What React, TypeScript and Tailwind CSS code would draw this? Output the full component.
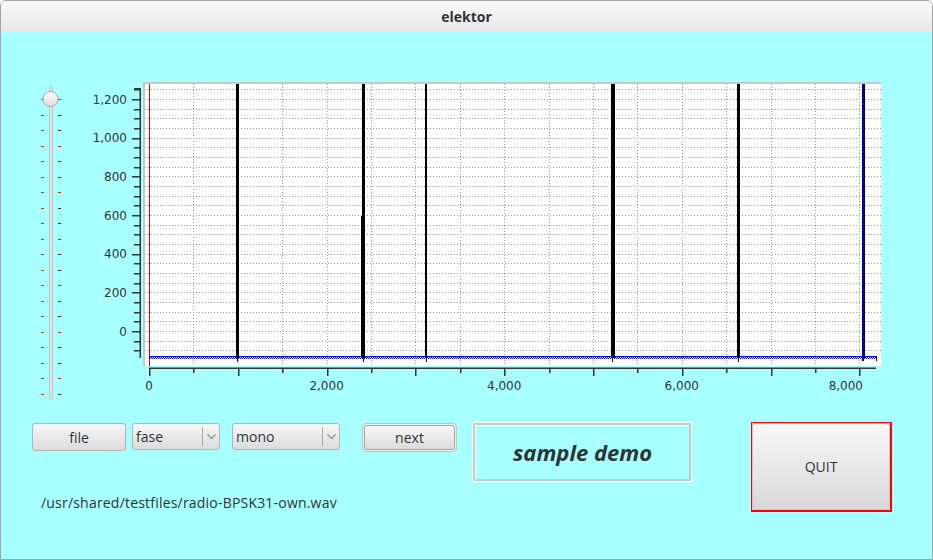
import React from 'react';

const yOf = (v: number) => 331 - v * 0.19333;
const xOf = (v: number) => 149 + v * 0.0888;

const yGrid = Array.from({ length: 28 }, (_, i) => -100 + i * 50);
const xGrid = Array.from({ length: 16 }, (_, i) => (i + 1) * 500);
const yLabels = [0, 200, 400, 600, 800, 1000, 1200];
const xLabels = [0, 2000, 4000, 6000];

// spikes: left x, width
const spikes = [
    { x: 236, w: 3 },
    { x: 362, w: 3 },
    { x: 425, w: 2 },
    { x: 611, w: 4 },
    { x: 737, w: 3 },
];

function Slider() {
    const ticks = Array.from({ length: 20 }, (_, i) => 99 + i * 15.5);
    return (
        <svg width={40} height={320} className="shrink-0">
            <defs>
                <linearGradient id="knob" x1="0" y1="0" x2="0" y2="1">
                    <stop offset="0" stopColor="#ffffff" />
                    <stop offset="1" stopColor="#dedede" />
                </linearGradient>
            </defs>
            <g transform="translate(-30,-80)">
                {ticks.map((y, i) => (
                    <g key={i}>
                        <rect x={41} y={Math.round(y)} width={3} height={1} fill={i % 4 === 2 ? '#555' : '#c0400a'} />
                        <rect x={58} y={Math.round(y)} width={3} height={1} fill={i % 3 === 0 ? '#d02000' : '#4a2a20'} />
                    </g>
                ))}
                <rect x={49} y={86} width={4} height={313} rx={2} fill="#c4c4c4" />
                <rect x={50} y={87} width={2} height={311} fill="#e2e2e2" />
                <circle cx={50.5} cy={99} r={7.5} fill="url(#knob)" stroke="#a6a6a6" />
            </g>
        </svg>
    );
}

function Chart() {
    return (
        <svg width={830} height={320} className="shrink-0" style={{ fontFamily: '"DejaVu Sans", sans-serif' }}>
            <defs>
                <pattern id="chk" width="2" height="2" patternUnits="userSpaceOnUse">
                    <rect x="0" y="0" width="1" height="1" fill="#0000ff" />
                    <rect x="1" y="1" width="1" height="1" fill="#0000ff" />
                </pattern>
                <pattern id="dots" width="2" height="2" patternUnits="userSpaceOnUse">
                    <rect x="0" y="0" width="2" height="2" fill="#000060" />
                    <rect x="1" y="0" width="1" height="1" fill="#0000ff" />
                </pattern>
            </defs>
            <g transform="translate(-70,-80)">
                {/* plot frame */}
                <rect x={143} y={82} width={738} height={284} fill="#c8c8c8" />
                <rect x={145} y={84} width={736} height={282} fill="#ffffff" />

                {/* grid */}
                {yGrid.map((v) => (
                    <line key={v} x1={145} x2={881} y1={Math.round(yOf(v)) + 0.5} y2={Math.round(yOf(v)) + 0.5} stroke="#9a9a9a" strokeDasharray="1 2" />
                ))}
                {xGrid.map((v) => (
                    <line key={v} x1={Math.round(xOf(v)) + 0.5} x2={Math.round(xOf(v)) + 0.5} y1={84} y2={366} stroke="#9a9a9a" strokeDasharray="1 2" />
                ))}

                {/* red marker */}
                <rect x={149} y={84} width={1} height={282} fill="#e00000" />

                {/* baseline */}
                <rect x={149} y={356} width={728} height={1} fill="#0000ff" />
                <rect x={149} y={357} width={728} height={2} fill="url(#chk)" />
                <rect x={876} y={356} width={1} height={5} fill="#000" />

                {/* spikes */}
                {spikes.map((s) => (
                    <g key={s.x}>
                        <rect x={s.x} y={84} width={s.w} height={274} fill="#000" />
                        <rect x={s.x + 1} y={358} width={1} height={4} fill="#000" />
                    </g>
                ))}
                <rect x={361} y={216} width={1} height={142} fill="#000" />
                <rect x={862} y={84} width={3} height={274} fill="url(#dots)" />
                <rect x={862} y={358} width={2} height={3} fill="#000" />

                {/* y axis */}
                <rect x={139.5} y={88} width={1.5} height={270} fill="#333" />
                {yGrid.map((v) => {
                    const major = v % 200 === 0 && v >= 0;
                    return (
                        <rect key={v} x={major ? 132 : 134} y={Math.round(yOf(v))} width={major ? 8 : 6} height={1.5} fill="#333" />
                    );
                })}
                <rect x={134} y={88} width={6} height={1.5} fill="#333" />
                {yLabels.map((v) => (
                    <text key={v} x={127} y={yOf(v) + 4.5} textAnchor="end" fontSize={12} fill="#333">
                        {v.toLocaleString('en-US')}
                    </text>
                ))}

                {/* x axis */}
                <rect x={149} y={367.5} width={727} height={1.5} fill="#333" />
                {Array.from({ length: 17 }, (_, i) => i * 500).map((v) => {
                    const major = v % 1000 === 0;
                    return (
                        <rect key={v} x={Math.round(xOf(v))} y={368} width={1.5} height={major ? 8 : 5} fill="#333" />
                    );
                })}
                {xLabels.map((v) => (
                    <text key={v} x={xOf(v)} y={390} textAnchor="middle" fontSize={12} fill="#333">
                        {v.toLocaleString('en-US')}
                    </text>
                ))}
                <text x={863} y={390} textAnchor="end" fontSize={12} fill="#333">
                    8,000
                </text>
            </g>
        </svg>
    );
}

function Button({ label, className }: { label: string; className: string }) {
    return (
        <div className={`flex items-center justify-center rounded-[3px] border border-[#b4b4b4] bg-linear-to-b from-[#f7f7f7] to-[#dcdcdc] text-[14px] text-[#2e3436] ${className}`}>
            {label}
        </div>
    );
}

function Combo({ label, className }: { label: string; className: string }) {
    return (
        <div className={`flex items-center rounded-[3px] border border-[#b4b4b4] bg-linear-to-b from-[#f7f7f7] to-[#dcdcdc] text-[14px] text-[#2e3436] ${className}`}>
            <span className="flex-1 pl-[3px]">{label}</span>
            <span className="h-[19px] w-px bg-[#a9a9a9]" />
            <span className="flex w-[16px] justify-center">
                <svg width={9} height={6}>
                    <polyline points="0.5,0.5 4.5,4.5 8.5,0.5" fill="none" stroke="#8a8a8a" strokeWidth={1.2} />
                </svg>
            </span>
        </div>
    );
}

export default function App() {
    return (
        <div className="flex h-[560px] w-[933px] flex-col overflow-hidden rounded-t-[6px] border border-[#a3a3a3] font-['Open_Sans',sans-serif]">
            <div className="flex h-[31px] shrink-0 items-center justify-center bg-linear-to-b from-[#f8f8f8] to-[#e8e8e8]">
                <span className="text-[14px] font-bold text-[#2e3436]">elektor</span>
            </div>

            <div className="flex-1 bg-[#a8ffff]">
                <div className="flex pl-[29px] pt-[48px]">
                    <Slider />
                    <Chart />
                </div>

                <div className="mt-[22px] flex items-start pl-[31px]">
                    <div className="flex w-[425px] flex-col">
                        <div className="flex items-start">
                            <Button label="file" className="mt-[1px] h-[28px] w-[94px]" />
                            <Combo label="fase" className="ml-[6px] mt-[1px] h-[27px] w-[88px]" />
                            <Combo label="mono" className="ml-[12px] mt-[1px] h-[27px] w-[108px]" />
                            <div className="ml-[22px] mt-[1px] flex h-[29px] w-[95px] rounded-[4px] border border-[#c2c2c2] bg-[#eeeeee] p-[1px]">
                                <div className="flex flex-1 items-center justify-center rounded-[3px] border border-[#a4a4a4] bg-linear-to-b from-[#f7f7f7] to-[#dcdcdc] text-[14px] text-[#2e3436]">
                                    next
                                </div>
                            </div>
                        </div>
                        <div className="mt-[42px] pl-[9px] text-[14px] leading-[18px] tracking-[0.2px] text-[#2e3436]">
                            /usr/shared/testfiles/radio-BPSK31-own.wav
                        </div>
                    </div>

                    <div className="ml-[15px] flex h-[60px] w-[220px] border border-white">
                        <div className="flex flex-1 border-2 border-[#c9c9c9]">
                            <div className="flex flex-1 items-center justify-center border-l border-t border-white">
                                <span className="text-[22px] font-bold italic text-[#2e3436]">sample demo</span>
                            </div>
                        </div>
                    </div>

                    <div className="ml-[59px] flex h-[90px] w-[141px] border border-r-2 border-b-2 border-[#ff0000]">
                        <div className="flex flex-1 items-center justify-center rounded-[3px] border border-[#c6c6c6] bg-linear-to-b from-[#f8f8f8] to-[#d8d8d8] text-[14px] text-[#2e3436]">
                            QUIT
                        </div>
                    </div>
                </div>
            </div>
        </div>
    );
}
